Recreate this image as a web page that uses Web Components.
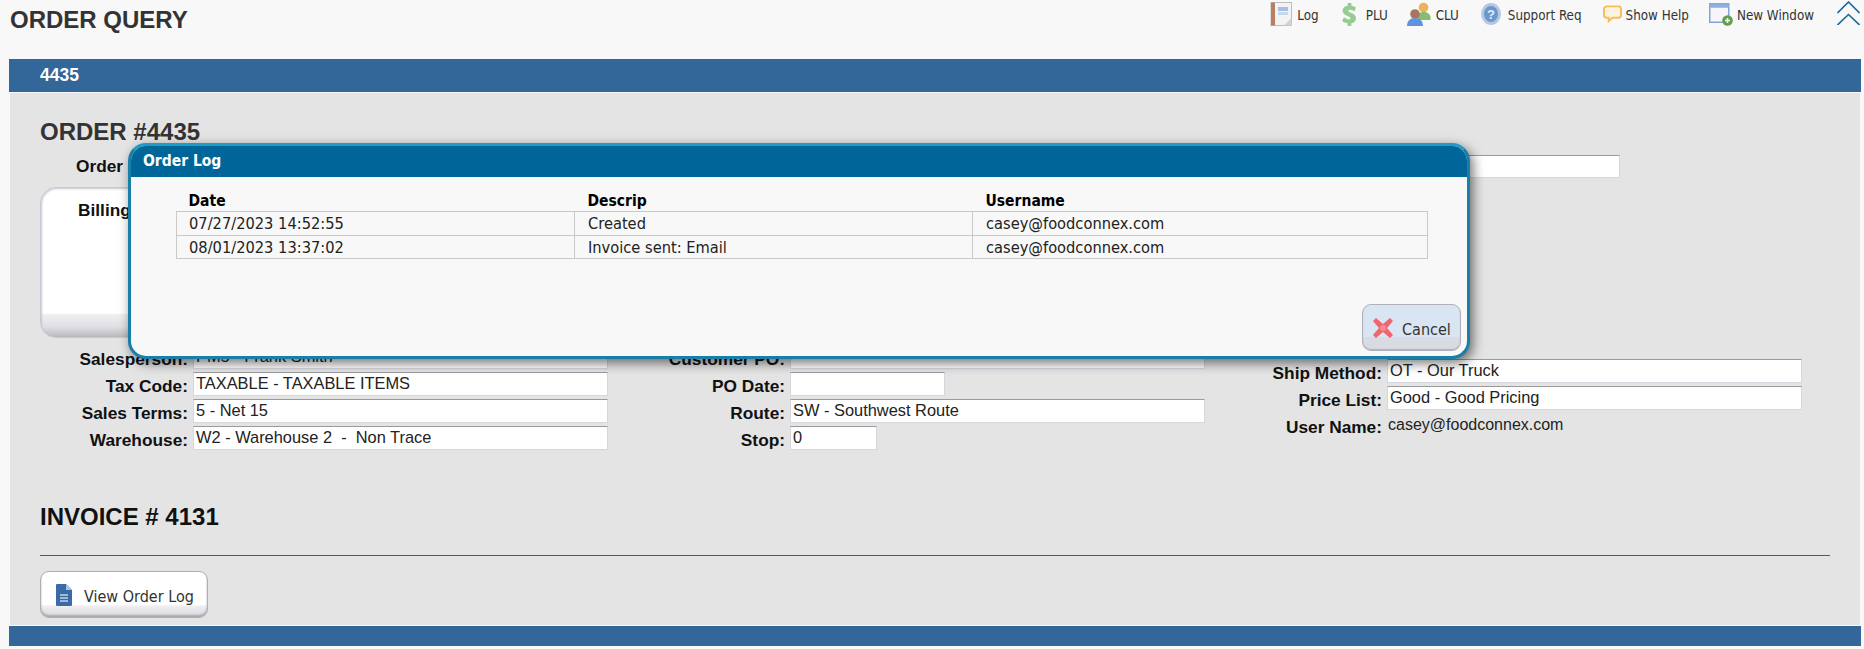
<!DOCTYPE html>
<html><head><meta charset="utf-8"><style>
html,body{margin:0;padding:0;background:#f8f8f8;width:1864px;height:649px;overflow:hidden;font-family:"Liberation Sans",Arial,sans-serif}
</style></head><body>
<oq-page></oq-page>
<script>
const ICONS={
log:`<svg width="22" height="24" viewBox="0 0 22 24"><rect x="1" y=".5" width="20.500" height="23" fill="#f3f3f3" stroke="#bdbdbd"/><rect x="1" y=".5" width="4" height="23" fill="#b9805f"/><rect x="8" y="5" width="10" height="4" fill="#a4c0e6"/><rect x="8" y="10" width="10" height="3" fill="#c7d7ec"/><path d="M14 23.500l7.500-7.500v7.500z" fill="#d2d2d2"/></svg>`,
plu:`<svg width="17" height="24" viewBox="0 0 18 26"><path d="M7 1h4v3c2 .3 4 1 5 2l-1.500 4c-2-1-4-2-6-1.500-1.500.5-1 2 .5 2.500 4 1.300 7 3 7 6.500 0 3-2 5-5 5.500V26H7v-3c-2-.3-4-1-6-2.500l2-4c2 1.500 4 2.500 6 2.300 1.500-.2 1.500-1.800 0-2.500C5 14.500 1.500 13 1.500 9 1.500 6.500 4 4.500 7 4z" fill="#94cc92"/></svg>`,
clu:`<svg width="24" height="24" viewBox="0 0 24 24"><circle cx="16.500" cy="5.500" r="4.800" fill="#e8b45c"/><path d="M10 16c0-4 3-6 6.500-6s7 2 7 5.500V18H12z" fill="#86bd72"/><circle cx="8" cy="12" r="4.800" fill="#a8755f"/><path d="M0 24c0-5 3-8 8-8s8 3 8 8z" fill="#5f93de"/></svg>`,
help:`<svg width="20" height="22" viewBox="0 0 20 22"><ellipse cx="10" cy="11" rx="10" ry="11" fill="#b3c8e4"/><ellipse cx="10" cy="11" rx="7" ry="8" fill="#6b97cd"/><text x="10" y="16" text-anchor="middle" font-family="Liberation Sans" font-size="13" font-weight="700" fill="#e8f0fa">?</text></svg>`,
bubble:`<svg width="19" height="18" viewBox="0 0 20 19"><path d="M4 1.500h12a3 3 0 0 1 3 3v6a3 3 0 0 1-3 3H10l-4 3.500v-3.500H4a3 3 0 0 1-3-3v-6a3 3 0 0 1 3-3z" fill="#fdf3e2" stroke="#f7bd55" stroke-width="2"/></svg>`,
win:`<svg width="24" height="23" viewBox="0 0 24 23"><rect x=".75" y=".75" width="19" height="18.500" fill="#f4f6fb" stroke="#84a5d4" stroke-width="1.500"/><rect x=".75" y=".75" width="19" height="4" fill="#8fb0da"/><circle cx="18.500" cy="17.500" r="5.300" fill="#629e4e"/><path d="M18.500 15v5M16 17.500h5" stroke="#fff" stroke-width="1.500"/></svg>`,
doc:`<svg width="16" height="22" viewBox="0 0 16 22"><path d="M0 1a1 1 0 0 1 1-1h9l6 6v15a1 1 0 0 1-1 1H1a1 1 0 0 1-1-1z" fill="#3a6ba5"/><path d="M10 0l6 6h-6z" fill="#a9c4e3"/><path d="M4 11h8M4 14h8M4 17h8" stroke="#c4d4e8" stroke-width="1.300"/></svg>`,
x:`<svg width="20" height="20" viewBox="0 0 20 20"><path d="M3 0l7 6 7-6 3 3-6 7 6 7-3 3-7-6-7 6-3-3 6-7-6-7z" fill="#f0646e"/><circle cx="10" cy="10" r="3" fill="#f78b90"/></svg>`
};
const COND='"DejaVu Sans Condensed","DejaVu Sans",Verdana,sans-serif';
function def(name,css,html){customElements.define(name,class extends HTMLElement{connectedCallback(){if(this.shadowRoot)return;const s=this.attachShadow({mode:'open'});s.innerHTML=`<style>${css}</style>`+(typeof html==='function'?html(this):html);}});}

def('oq-tool',`:host{display:inline-flex;align-items:center;gap:var(--g,5px);font:13.300px ${COND};font-stretch:condensed;color:#333;white-space:nowrap;margin-right:var(--m,0)}svg{display:block}span{padding-top:2px}`,
  h=>`${ICONS[h.getAttribute('icon')]}<span><slot></slot></span>`);

def('oq-header',`:host{display:flex;height:59px;box-sizing:border-box;align-items:flex-start;justify-content:space-between;padding:0 4px 0 10px}
h1{margin:6px 0 0;font:bold 24px/28px "Liberation Sans",sans-serif;color:#333}
nav{display:flex;align-items:center;height:24px;margin-top:2px}
svg.up{display:block;margin-left:23px;margin-top:-2px}`,
`<h1>ORDER QUERY</h1><nav>
<oq-tool icon="log" style="--m:22px">Log</oq-tool>
<oq-tool icon="plu" style="--m:19px;--g:8px">PLU</oq-tool>
<oq-tool icon="clu" style="--m:22px">CLU</oq-tool>
<oq-tool icon="help" style="--m:21px;--g:7px">Support Req</oq-tool>
<oq-tool icon="bubble" style="--m:20px;--g:4px">Show Help</oq-tool>
<oq-tool icon="win" style="--g:4px">New Window</oq-tool>
<svg class="up" width="23" height="24" viewBox="0 0 23 24" fill="none" stroke="#1d6a9c" stroke-width="1.600"><path d="M.5 12L11.500 1l11 11M.5 24l11-10.500 11 10.500"/></svg></nav>`);

def('oq-bar',`:host{display:flex;align-items:center;background:#336699;color:#fff;font:bold 17.500px "Liberation Sans",sans-serif;box-sizing:border-box;padding-left:31px;height:var(--h,33px)}`,`<slot></slot>`);

def('oq-field',`:host{display:flex;align-items:flex-start;height:27px}
label{flex:none;width:var(--lw,178px);text-align:right;font:bold 17.300px/20px "Liberation Sans",sans-serif;color:#111;margin:4px 5px 0 0;white-space:nowrap}
.i{flex:none;box-sizing:border-box;height:24px;width:var(--iw,415px);background:#fff;border:1px solid #d6d6de;border-top:1px solid #9a9a9a;padding:1px 2px 0;font:16.400px/19px "Liberation Sans",sans-serif;color:#222;white-space:pre;overflow:hidden}
.t{font:16px/19px "Liberation Sans",sans-serif;color:#222;padding:2px 0 0 1px;white-space:pre}`,
h=>`<label>${h.getAttribute('label')}</label>`+(h.hasAttribute('plain')?`<div class="t">${h.getAttribute('value')}</div>`:`<div class="i" style="${h.getAttribute('w')?`width:${h.getAttribute('w')}px`:''}">${h.getAttribute('value')||''}</div>`));

def('oq-btn',`:host{display:inline-flex;align-items:center;box-sizing:border-box;border:1px solid #aeaeb6;border-radius:9px;color:#333;font:16px ${COND};font-stretch:condensed;height:47px;white-space:nowrap;
 background:linear-gradient(#fff 0,#fff 72%,#efeff2 76%,#d8d8de 100%);box-shadow:inset 0 -2px 2px #a8a8b0}
 span{padding-top:4px}`,`<slot name="i"></slot><span><slot></slot></span>`);

def('oq-card',`:host{display:block;flex:none;box-sizing:border-box;width:1200px;height:151px;border:1px solid #c8c8d2;border-radius:16px;background:linear-gradient(#fff 0,#fff 84%,#efeff1 85%,#e0e0e4 93%,#b8b8be 100%);box-shadow:inset 1px 1px 2px #c8c8d2;padding:12px 0 0 37px;font:bold 17.300px/20px "Liberation Sans",sans-serif;color:#111}`,`<slot></slot>`);

def('oq-dialog',`:host{position:absolute;left:128px;top:143px;width:1342px;height:216px;box-sizing:border-box;border:3px solid #1a7fa8;border-top-color:#1e9cc6;border-radius:18px;background:#f8f8f8;box-shadow:3px 4px 12px rgba(0,0,0,.55);overflow:hidden;display:flex;flex-direction:column}
header{height:31px;background:#006699;color:#fff;font:bold 15.500px/30px ${COND};font-stretch:condensed;padding-left:12px;flex:none}
.b{padding:14px 0 0 45px;flex:1;position:relative}
table{border-collapse:collapse;width:1252px;table-layout:fixed;font:16.300px ${COND};font-stretch:condensed;color:#222}
th{font:bold 15.500px ${COND};font-stretch:condensed;color:#000;text-align:left;padding:0 0 0 13px;height:20px;line-height:20px;vertical-align:bottom}
td{border:1px solid #c9c9c9;padding:2px 0 0 13px;height:23.500px;line-height:20px;box-sizing:border-box}
td.d,th.d{padding-left:12px}
.a{position:absolute;right:6px;bottom:5px}
oq-btn{width:99px;padding-left:10px;gap:9px;border-color:#b0b0ba;background:linear-gradient(#d9e5f2 0,#d9e5f2 70%,#d8dbe2 72%,#d8dbe2 100%);box-shadow:inset 0 -1px 1px #b0b0ba}
`,
`<header>Order Log</header><div class="b"><table><colgroup><col style="width:398px"><col style="width:398px"><col></colgroup>
<tr><th class="d">Date</th><th>Descrip</th><th>Username</th></tr>
<tr><td class="d">07/27/2023 14:52:55</td><td>Created</td><td>casey@foodconnex.com</td></tr>
<tr><td class="d">08/01/2023 13:37:02</td><td>Invoice sent: Email</td><td>casey@foodconnex.com</td></tr></table>
<div class="a"><oq-btn><span slot="i" style="display:flex">${ICONS.x}</span>Cancel</oq-btn></div></div>`);

def('oq-page',`:host{display:block;position:relative;width:1864px;height:649px}
.main{margin:1px 4px 1px 10px;background:#e4e4e4}
.top{margin:0 3px 0 9px}
.c{padding:25px 0 0 30px;height:532px;box-sizing:border-box;display:flex;flex-direction:column}
h2{margin:0;font:bold 24px/28px "Liberation Sans",sans-serif;color:#333;flex:none}
.order{display:flex;height:23px;margin:9px 0;flex:none}
.ol{font:bold 17.300px/23px "Liberation Sans",sans-serif;color:#111;margin-left:36px}
.oi{box-sizing:border-box;height:23px;width:400px;background:#fff;border:1px solid #d6d6de;border-top:1px solid #9a9a9a;margin-left:auto;margin-right:240px}
.cols{display:grid;grid-template-columns:566px 595px 1fr;margin-top:7px;height:108px;flex:none}
.rc{padding-top:14px}
h3{margin:50px 0 0;font:bold 24px/28px "Liberation Sans",sans-serif;color:#111;flex:none}
hr{border:0;border-top:1px solid #2b668f;margin:24px 0 0;width:1790px;flex:none}
.v{margin-top:15px;flex:none}
.v oq-btn{width:168px;padding-left:15px;gap:12px}
.foot{margin:0 3px 0 9px}`,
`<oq-header></oq-header>
<div class="top"><oq-bar>4435</oq-bar></div>
<div class="main"><div class="c">
<h2>ORDER #4435</h2>
<div class="order"><div class="ol">Order</div><div class="oi"></div></div>
<oq-card>Billing</oq-card>
<div class="cols">
<div style="--lw:148px">
<oq-field label="Salesperson:" value="PM5 - Frank Smith"></oq-field>
<oq-field label="Tax Code:" value="TAXABLE - TAXABLE ITEMS"></oq-field>
<oq-field label="Sales Terms:" value="5 - Net 15"></oq-field>
<oq-field label="Warehouse:" value="W2 - Warehouse 2  -  Non Trace"></oq-field>
</div>
<div style="--lw:179px">
<oq-field label="Customer PO:" value="" w="415"></oq-field>
<oq-field label="PO Date:" value="" w="155"></oq-field>
<oq-field label="Route:" value="SW - Southwest Route" w="415"></oq-field>
<oq-field label="Stop:" value="0" w="87"></oq-field>
</div>
<div class="rc" style="--lw:181px">
<oq-field label="Ship Method:" value="OT - Our Truck" w="415"></oq-field>
<oq-field label="Price List:" value="Good - Good Pricing" w="415"></oq-field>
<oq-field label="User Name:" plain value="casey@foodconnex.com"></oq-field>
</div>
</div>
<h3>INVOICE # 4131</h3>
<hr>
<div class="v"><oq-btn><span slot="i" style="display:flex">${ICONS.doc}</span>View Order Log</oq-btn></div>
</div></div>
<div class="foot"><oq-bar style="--h:20px"></oq-bar></div>
<oq-dialog></oq-dialog>`);
</script></body></html>
